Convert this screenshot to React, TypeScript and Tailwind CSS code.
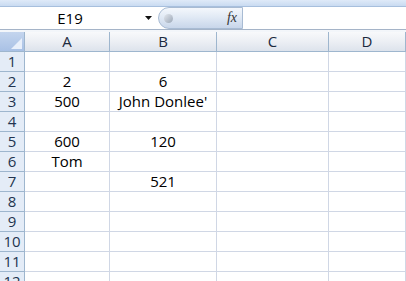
import React from 'react';

const COLS = ['A', 'B', 'C', 'D'];

// cell values by row, keyed by column letter
const DATA: Record<number, Record<string, string>> = {
  2: { A: '2', B: '6' },
  3: { A: '500', B: "John Donlee'" },
  5: { A: '600', B: '120' },
  6: { A: 'Tom' },
  7: { B: '521' },
};

const ROWS = Array.from({ length: 12 }, (_, i) => i + 1);

export default function App() {
  return (
    <div className="w-[406px] h-[281px] overflow-hidden bg-white text-[15px] text-black" style={{ fontFamily: '"Open Sans", "Liberation Sans", sans-serif' }}>
      {/* ribbon edge */}
      <div className="h-[7px] bg-gradient-to-b from-[#dfeaf8] to-[#c9dbf1] border-b border-[#a7bfdd]" />

      {/* formula bar */}
      <div className="flex h-[23px] bg-white border-b border-[#a5b4c8]">
        <div className="w-[158px] flex items-center relative">
          <span className="w-[140px] text-center text-[15px] leading-none">E19</span>
          <svg className="absolute left-[145px] top-[9px]" width="7" height="4" viewBox="0 0 7 4">
            <path d="M0 0h7L3.5 4z" fill="#111" />
          </svg>
        </div>
        <div className="w-[85px] relative flex items-center justify-end pr-[5px] rounded-l-full border border-[#a8bbd3] bg-gradient-to-b from-[#f4f7fc] via-[#dfe8f4] to-[#c8d6ea]">
          <div className="absolute left-[5px] top-[6px] w-[9px] h-[9px] rounded-full bg-gradient-to-br from-[#e4e8ee] to-[#9aa6b6]" />
          <span className="text-[14px] italic text-[#333] leading-none" style={{ fontFamily: '"Liberation Serif", "DejaVu Serif", serif' }}>fx</span>
        </div>
        <div className="flex-1 bg-white" />
      </div>

      <div className="h-[2px] bg-[#f3f6fa]" />

      {/* sheet */}
      <div className="grid grid-cols-[25px_85px_107px_112px_77px]">
        {/* header row */}
        <div className="h-[20px] relative bg-gradient-to-b from-[#c4d5ee] to-[#a9c1e5] border-r border-b border-[#9eb6ce]">
          <svg className="absolute right-[2px] bottom-[2px]" width="11" height="11" viewBox="0 0 11 11">
            <path d="M11 0v11H0z" fill="#e9f0fb" />
          </svg>
        </div>
        {COLS.map((c) => (
          <div
            key={c}
            className="h-[20px] flex items-center justify-center bg-gradient-to-b from-[#f8f9fb] via-[#eceff4] to-[#dde3ec] border-r border-b border-[#9eb6ce] text-[15px] text-[#1c2a3e] leading-none"
          >
            {c}
          </div>
        ))}

        {ROWS.map((r) => (
          <React.Fragment key={r}>
            <div className="h-[20px] flex items-center justify-center bg-[#e4ecf7] border-r border-b border-[#9eb6ce] text-[15px] text-[#22344f] leading-none">
              {r}
            </div>
            {COLS.map((c) => (
              <div
                key={c}
                className="h-[20px] flex items-center justify-center border-r border-b border-[#d0d7e5] leading-none whitespace-nowrap"
              >
                {DATA[r]?.[c] ?? ''}
              </div>
            ))}
          </React.Fragment>
        ))}
      </div>
    </div>
  );
}
